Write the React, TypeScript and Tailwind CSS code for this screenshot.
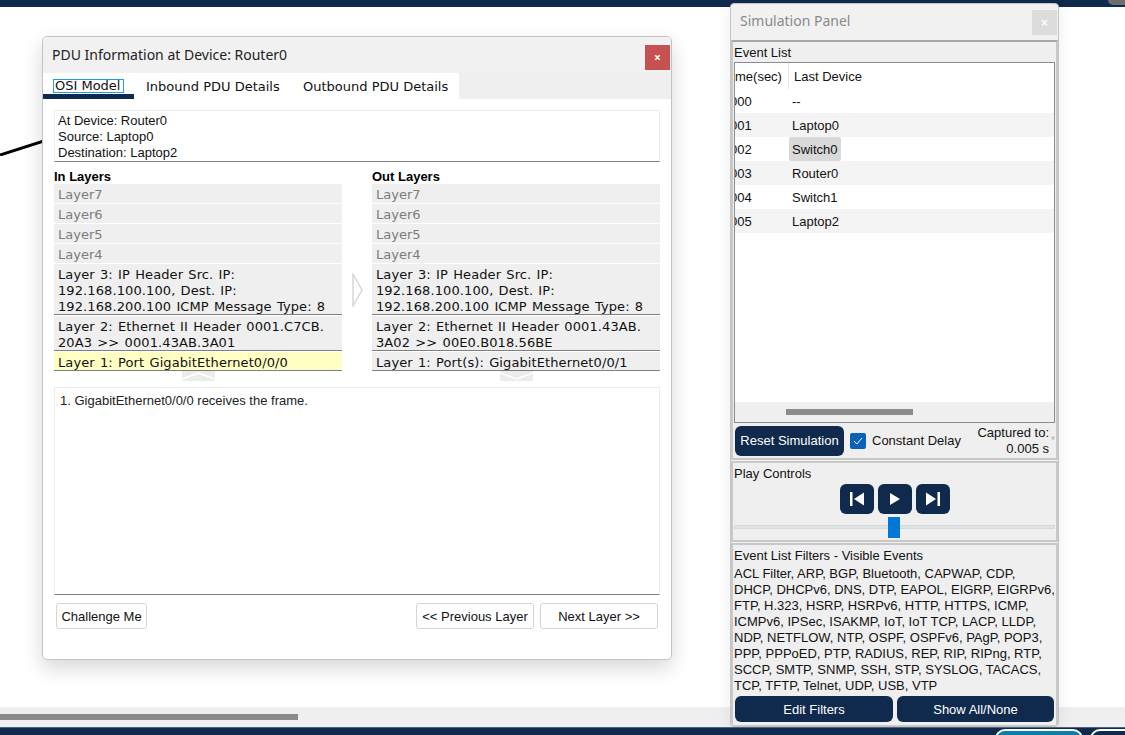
import React from "react";

const ui = "font-['Liberation_Sans',Arial,sans-serif]";
const verdana = "font-['DejaVu_Sans',Verdana,sans-serif]";

const GhostLayer = ({ name }: { name: string }) => (
  <div className={`h-[19px] mb-px bg-[#efefef] pl-1 text-[13px] leading-[21px] text-[#7c7c7c] ${verdana}`}>{name}</div>
);

const LayerBlock = ({ lines, highlight }: { lines: string[]; highlight?: boolean }) => (
  <div
    className={`border-b border-[#7f7f7f] pl-1 pt-[3px] mt-px text-[13px] leading-4 tracking-[0.1px] [word-spacing:1px] text-[#111] ${verdana} ${
      highlight ? "bg-[#ffffc4]" : "bg-[#efefef]"
    }`}
  >
    <div className="-mb-px">
      {lines.map((l) => (
        <div key={l} className="whitespace-nowrap">
          {l}
        </div>
      ))}
    </div>
  </div>
);

const LayerColumn = ({
  title,
  layer3,
  layer2,
  layer1,
  highlight,
}: {
  title: string;
  layer3: string[];
  layer2: string[];
  layer1: string;
  highlight?: boolean;
}) => (
  <div className="w-[288px]">
    <div className={`text-[13px] font-bold leading-[15px] text-black ${ui}`}>{title}</div>
    {["Layer7", "Layer6", "Layer5", "Layer4"].map((n) => (
      <GhostLayer key={n} name={n} />
    ))}
    <LayerBlock lines={layer3} />
    <LayerBlock lines={layer2} />
    <LayerBlock lines={[layer1]} highlight={highlight} />
  </div>
);

const PduDialog = () => (
  <div className="absolute left-[42px] top-[29px] w-[630px] h-[624px] bg-white border border-[#c4c4c4] rounded-[5px] shadow-[0_8px_20px_rgba(0,0,0,0.16)] overflow-hidden">
    <div className="h-9 bg-[#f1f1f1] flex items-start justify-between pl-[9px] pr-[1px]">
      <span className="mt-2 text-[14px] leading-5 text-[#222] font-['Noto_Sans',sans-serif]">PDU Information at Device: Router0</span>
      <button className="mt-[8px] w-[25px] h-[25px] bg-[#c75050] text-white text-xs font-bold flex items-center justify-center">
        ×
      </button>
    </div>
    <div className={`h-[26px] bg-[#efefef] flex text-[13px] text-[#111] ${verdana}`}>
      <div className="w-[91px] bg-white border-b-[5px] border-[#0f2a4d] pl-[10px] pt-[6px]">
        <span className="border border-[#1ba1e2] px-px leading-[12px] block w-[71px] h-[14px]">OSI Model</span>
      </div>
      <div className="bg-white pl-3 pt-[4px] w-[157px]">Inbound PDU Details</div>
      <div className="bg-white pl-[12px] pt-[4px] w-[168px]">Outbound PDU Details</div>
    </div>
    <div className="px-[11px] pt-[11px]">
      <div className={`h-[52px] border border-[#ececec] border-b-[#7f7f7f] pl-[3px] pt-[2px] text-[13px] leading-4 text-[#111] ${ui}`}>
        <div>At Device: Router0</div>
        <div>Source: Laptop0</div>
        <div>Destination: Laptop2</div>
      </div>
      <div className="flex mt-[7px]">
        <LayerColumn
          title="In Layers"
          layer3={["Layer 3: IP Header Src. IP:", "192.168.100.100, Dest. IP:", "192.168.200.100 ICMP Message Type: 8"]}
          layer2={["Layer 2: Ethernet II Header 0001.C7CB.", "20A3 >> 0001.43AB.3A01"]}
          layer1="Layer 1: Port GigabitEthernet0/0/0"
          highlight
        />
        <div className="w-[30px] flex justify-center pt-[104px] pl-[2px]">
          <svg width="12" height="34" viewBox="0 0 12 34" fill="none">
            <path d="M1 1 L10 17 L1 33 Z" stroke="#d8d8d8" strokeWidth="1.5" fill="#fff" />
          </svg>
        </div>
        <LayerColumn
          title="Out Layers"
          layer3={["Layer 3: IP Header Src. IP:", "192.168.100.100, Dest. IP:", "192.168.200.100 ICMP Message Type: 8"]}
          layer2={["Layer 2: Ethernet II Header 0001.43AB.", "3A02 >> 00E0.B018.56BE"]}
          layer1="Layer 1: Port(s): GigabitEthernet0/0/1"
        />
      </div>
      <div className="flex h-[16px]">
        <div className="w-[288px] flex justify-center">
          <svg width="33" height="10" viewBox="0 0 33 10" className="bg-[#ececec]">
            <path d="M0 8 L16.5 2 L33 8" stroke="#fff" strokeWidth="1.5" fill="none" />
          </svg>
        </div>
        <div className="w-[30px]" />
        <div className="w-[288px] flex justify-center">
          <svg width="33" height="10" viewBox="0 0 33 10" className="bg-[#ececec]">
            <path d="M0 2 L16.5 8 L33 2" stroke="#fff" strokeWidth="1.5" fill="none" />
          </svg>
        </div>
      </div>
      <div className={`h-[208px] border border-[#ececec] border-b-[#7f7f7f] pl-[5px] pt-[5px] text-[13px] leading-4 text-[#222] ${ui}`}>
        1. GigabitEthernet0/0/0 receives the frame.
      </div>
      <div className={`flex justify-between mt-2 pl-[2px] pr-[2px] text-[13px] text-[#111] ${ui}`}>
        <button className="h-[26px] w-[91px] pt-[2px] border border-[#d4d4d4] rounded-[3px] bg-white">Challenge Me</button>
        <div className="flex gap-[6px]">
          <button className="h-[26px] w-[118px] pt-[2px] border border-[#d4d4d4] rounded-[3px] bg-white">&lt;&lt; Previous Layer</button>
          <button className="h-[26px] w-[118px] pt-[2px] border border-[#d4d4d4] rounded-[3px] bg-white">Next Layer &gt;&gt;</button>
        </div>
      </div>
    </div>
  </div>
);

const events = [
  ["000", "--"],
  ["001", "Laptop0"],
  ["002", "Switch0"],
  ["003", "Router0"],
  ["004", "Switch1"],
  ["005", "Laptop2"],
];

const filters =
  "ACL Filter, ARP, BGP, Bluetooth, CAPWAP, CDP, DHCP, DHCPv6, DNS, DTP, EAPOL, EIGRP, EIGRPv6, FTP, H.323, HSRP, HSRPv6, HTTP, HTTPS, ICMP, ICMPv6, IPSec, ISAKMP, IoT, IoT TCP, LACP, LLDP, NDP, NETFLOW, NTP, OSPF, OSPFv6, PAgP, POP3, PPP, PPPoED, PTP, RADIUS, REP, RIP, RIPng, RTP, SCCP, SMTP, SNMP, SSH, STP, SYSLOG, TACACS, TCP, TFTP, Telnet, UDP, USB, VTP";

const PlayBtn = ({ children }: { children: React.ReactNode }) => (
  <button className="w-[34px] h-[30px] bg-[#0f2a4d] rounded-[6px] flex items-center justify-center">{children}</button>
);

const SimPanel = () => (
  <div className={`absolute left-[730px] top-[-4px] w-[329px] h-[724px] bg-[#f1f1f1] border border-[#c4c4c4] rounded-[4px] shadow-[0_4px_16px_rgba(0,0,0,0.08)] text-[13px] text-[#111] overflow-hidden ${ui}`}>
    <div className="h-9 flex items-start justify-between pl-[9px] pr-[1px]">
      <span className="mt-[7px] text-[14px] leading-5 text-[#8a8a8a] font-['Noto_Sans',sans-serif]">Simulation Panel</span>
      <span className="mt-[6px] w-[25px] h-[25px] bg-[#dcdcdc] text-white flex items-center justify-center text-xs font-bold">×</span>
    </div>
    <div className="border-2 border-[#c8c8c8] border-t-[#a8a8a8] h-[420px] px-px bg-[#efefef]">
      <div className="h-5 leading-[21px]">Event List</div>
      <div className="h-[361px] w-[321px] border border-[#8c8c8c] bg-white flex flex-col">
        <div className="h-[26px] flex items-start">
          <div className="w-[54px] border-r border-[#e4e4e4] h-[26px] leading-[28px] overflow-hidden text-right pr-2 whitespace-nowrap">me(sec)</div>
          <div className="pl-[5px] leading-[28px]">Last Device</div>
        </div>
        {events.map(([t, d], i) => (
          <div key={t} className={`h-6 flex items-start ${i % 2 === 1 ? "bg-[#f4f4f4]" : "bg-white"}`}>
            <div className="w-[54px] h-6 leading-[26px] overflow-hidden whitespace-nowrap">
              <span className="block -ml-[5px] w-[24px]">{t}</span>
            </div>
            <div className={`h-6 leading-[26px] px-[3px] ${d === "Switch0" ? "bg-[#d9d9d9] rounded-[2px]" : ""}`}>{d}</div>
          </div>
        ))}
        <div className="flex-1" />
        <div className="h-5 bg-[#efefef] pl-[51px] pt-[7px]">
          <div className="w-[127px] h-[6px] bg-[#8c8c8c]" />
        </div>
      </div>
      <div className="flex items-center mt-[3px] h-[30px] pl-px">
        <button className="w-[109px] h-[30px] bg-[#0f2a4d] text-white rounded-[6px]">Reset Simulation</button>
        <span className="w-4 h-4 ml-[6px] bg-[#0a62b8] rounded-[2px] flex items-center justify-center">
          <svg width="10" height="8" viewBox="0 0 10 8" fill="none">
            <path d="M1 4 L3.8 7 L9 1" stroke="#fff" strokeWidth="1" />
          </svg>
        </span>
        <span className="ml-[6px]">Constant Delay</span>
        <div className="ml-auto pr-[6px] text-right leading-4 relative">
          <div>Captured to:</div>
          <div>0.005 s</div>
          <span className="absolute right-0 top-[10px] text-[10px] leading-3 text-[#c9a8a8]">*</span>
        </div>
      </div>
    </div>
    <div className="border-2 border-[#c8c8c8] h-[81px] mt-px px-px bg-[#efefef]">
      <div className="h-[18px] leading-[22px]">Play Controls</div>
      <div className="flex justify-center gap-[4px] mt-[3px]">
        <PlayBtn>
          <svg width="16" height="16" viewBox="0 0 16 16" fill="#fff">
            <rect x="1" y="1" width="2.5" height="14" />
            <path d="M15 1.5 V14.5 L5 8 Z" />
          </svg>
        </PlayBtn>
        <PlayBtn>
          <svg width="12" height="14" viewBox="0 0 12 14" fill="#fff">
            <path d="M1 1 L11 7 L1 13 Z" />
          </svg>
        </PlayBtn>
        <PlayBtn>
          <svg width="16" height="16" viewBox="0 0 16 16" fill="#fff">
            <path d="M1 1.5 V14.5 L11 8 Z" />
            <rect x="12.5" y="1" width="2.5" height="14" />
          </svg>
        </PlayBtn>
      </div>
      <div className="relative mt-[11px] h-[4px] bg-[#e1e4e4] border border-[#d6d9d9]">
        <div className="absolute left-[153px] top-[-9px] w-3 h-[21px] bg-[#0078d7]" />
      </div>
    </div>
    <div className="border-2 border-[#c8c8c8] h-[184px] mt-px px-px bg-[#efefef]">
      <div className="h-[19px] leading-[21px]">Event List Filters - Visible Events</div>
      <div className="leading-4 mt-[2px] w-[322px]">{filters}</div>
      <div className="flex gap-[4px] mt-[2px] pl-px text-white">
        <button className="w-[158px] h-[26px] pt-px bg-[#0f2a4d] rounded-[6px]">Edit Filters</button>
        <button className="w-[157px] h-[26px] pt-px bg-[#0f2a4d] rounded-[6px]">Show All/None</button>
      </div>
    </div>
  </div>
);

export default function App() {
  return (
    <div className="w-[1125px] h-[735px] overflow-hidden flex flex-col bg-white">
      <div className="h-[7px] bg-[#0f2a4d] relative">
        <div className="absolute right-0 top-0 w-[17px] h-[5px] bg-[#6d6d6d] rounded-bl-[6px]" />
      </div>
      <div className="relative flex-1">
        <svg className="absolute left-0 top-[113px]" width="44" height="36" viewBox="0 0 44 36">
          <path d="M0 35 L44 21" stroke="#000" strokeWidth="3" />
        </svg>
        <PduDialog />
        <SimPanel />
      </div>
      <div className="h-5 bg-[#efefef] pt-[7px]">
        <div className="w-[298px] h-[6px] bg-[#8a8a8a]" />
      </div>
      <div className="h-2 bg-[#0f2a4d] border-t border-[#4d6480] relative">
        <div className="absolute left-[995px] top-[1px] w-[88px] h-6 border-2 border-white rounded-[10px] bg-[#0b7fa8]" />
        <div className="absolute left-[1090px] top-[1px] w-[60px] h-6 border-2 border-white rounded-[10px] bg-[#0f2a4d]" />
      </div>
    </div>
  );
}
